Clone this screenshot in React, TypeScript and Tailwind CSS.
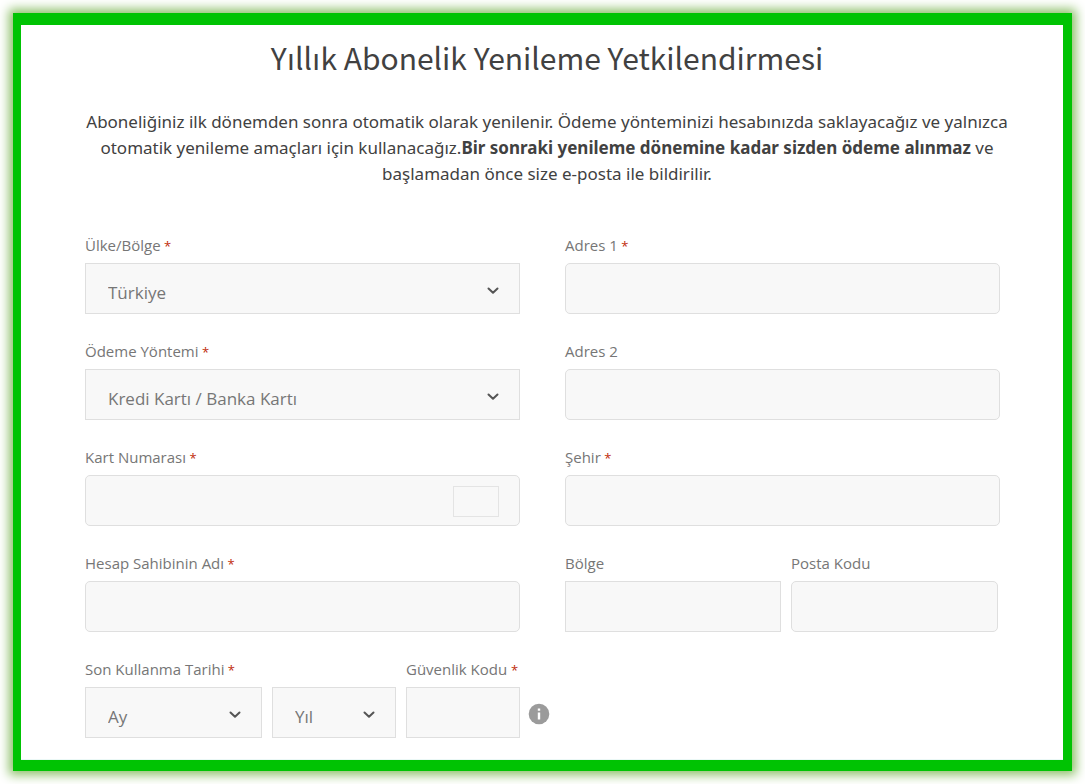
import type { ReactNode } from 'react';

const fieldBase = 'block h-[51px] w-full border border-[#dfdfdf] bg-[#f8f8f8] text-[#767676] outline-none';

const Label = ({ htmlFor, required, children }: { htmlFor: string; required?: boolean; children: ReactNode }) => (
  <label htmlFor={htmlFor} className="block h-7 whitespace-nowrap text-[15px] leading-[20px] text-[#767676]">
    {children}
    {required && <span className="text-[13px] leading-none text-[#c02b0a]"> *</span>}
  </label>
);

const TextField = ({ id, label, required, square, children }: { id: string; label: string; required?: boolean; square?: boolean; children?: ReactNode }) => (
  <div>
    <Label htmlFor={id} required={required}>{label}</Label>
    <div className="relative">
      <input id={id} type="text" className={`${fieldBase} px-[22px] text-[17px] ${square ? '' : 'rounded-[5px]'}`} />
      {children}
    </div>
  </div>
);

const Select = ({ id, options, ariaLabel }: { id: string; options: string[]; ariaLabel?: string }) => (
  <div className="relative">
    <select id={id} aria-label={ariaLabel} className={`${fieldBase} appearance-none pl-[22px] pt-2 text-[17px]`}>
      {options.map((option) => <option key={option}>{option}</option>)}
    </select>
    <svg className="pointer-events-none absolute right-[21px] top-[22px] h-3 w-3" viewBox="0 0 12 12" fill="none" stroke="#555" strokeWidth="2" strokeLinecap="round" strokeLinejoin="round">
      <path d="M1.5 3.5 6 7.8 10.5 3.5" />
    </svg>
  </div>
);

const SelectField = ({ id, label, options }: { id: string; label: string; options: string[] }) => (
  <div>
    <Label htmlFor={id} required>{label}</Label>
    <Select id={id} options={options} />
  </div>
);

const App = () => {
  return <div className="bg-white p-[13px] font-['Open_Sans',sans-serif]">
      <main className="border-b-[11px] border-l-8 border-r-[9px] border-t-[12px] border-[#00c303] bg-white shadow-[0_0_10px_4px_#8dbf69]">
        <div className="pl-[51px] pr-[41px] pt-[14px] text-center text-[#414141]">
          <h1 className="font-['Noto_Sans_CJK_SC',sans-serif] text-[30px] leading-[36px]">Yıllık Abonelik Yenileme Yetkilendirmesi</h1>
          <p className="mt-[34px] font-['Noto_Sans',sans-serif] text-[17px] leading-[26px]">
            Aboneliğiniz ilk dönemden sonra otomatik olarak yenilenir. Ödeme yönteminizi hesabınızda saklayacağız ve yalnızca otomatik yenileme amaçları için kullanacağız.<strong className="font-bold">Bir sonraki yenileme dönemine kadar sizden ödeme alınmaz</strong> ve başlamadan önce size e-posta ile bildirilir.
          </p>
        </div>

        <form className="grid grid-cols-2 gap-x-[45px] border-b border-[#ebf8f6] pb-[21px] pl-16 pr-[63px] pt-[48px]">
          {/* Payment details */}
          <div className="flex flex-col gap-[27px]">
            <SelectField id="country" label="Ülke/Bölge" options={['Türkiye']} />
            <SelectField id="method" label="Ödeme Yöntemi" options={['Kredi Kartı / Banka Kartı']} />
            <TextField id="card" label="Kart Numarası" required>
              <span className="absolute right-[21px] top-[11px] h-[31px] w-[46px] border border-[#e4e4e4]" />
            </TextField>
            <TextField id="holder" label="Hesap Sahibinin Adı" required />
            <div className="grid grid-cols-[177fr_124fr_114fr] gap-x-[10px]">
              <div>
                <Label htmlFor="month" required>Son Kullanma Tarihi</Label>
                <Select id="month" options={['Ay']} />
              </div>
              <div className="self-end">
                <Select id="year" ariaLabel="Yıl" options={['Yıl']} />
              </div>
              <TextField id="cvv" label="Güvenlik Kodu " required square>
                <svg className="absolute left-full top-4 ml-2 h-[22px] w-[22px]" viewBox="0 0 22 22">
                  <circle cx="11" cy="11" r="10.3" fill="#9b9b9b" />
                  <path d="M9.8 5.6h2.4v2.2H9.8zM9.8 9.4h2.4v7H9.8z" fill="#fff" />
                </svg>
              </TextField>
            </div>
          </div>

          {/* Address */}
          <div className="flex flex-col gap-[27px]">
            <TextField id="address1" label="Adres 1" required />
            <TextField id="address2" label="Adres 2" />
            <TextField id="city" label="Şehir" required />
            <div className="grid grid-cols-[216fr_207fr] gap-x-[10px] pr-[2px]">
              <TextField id="region" label="Bölge" square />
              <TextField id="zip" label="Posta Kodu" />
            </div>
          </div>
        </form>
      </main>
    </div>;
};
export default App;
